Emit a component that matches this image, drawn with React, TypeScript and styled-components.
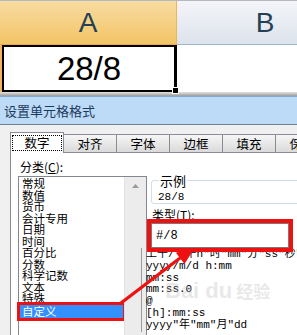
import React from "react";
import styled, { createGlobalStyle } from "styled-components";

const GlobalStyle = createGlobalStyle`
  html, body {
    margin: 0;
    padding: 0;
    background: #f0f0f0;
  }
`;

const Page = styled.div`
  position: relative;
  width: 297px;
  height: 335px;
  overflow: hidden;
  background: #f0f0f0;
  font-family: "Noto Sans CJK SC", sans-serif;
`;

const Sheet = styled.div`
  background: #ffffff;
`;

const HeaderRow = styled.div`
  display: flex;
  height: 45px;
  border-top: 1px solid #b4b9c0;
  box-sizing: border-box;
`;

const ColHeader = styled.div<{ $active?: boolean }>`
  flex: none;
  width: 177px;
  box-sizing: border-box;
  display: flex;
  align-items: center;
  justify-content: center;
  font-family: "Liberation Sans", Arial, sans-serif;
  font-size: 28px;
  color: #253f55;
  background: ${(p) =>
    p.$active
      ? "linear-gradient(#f9dca2, #f2c465)"
      : "linear-gradient(#f3f5f9, #dde3ec)"};
  border-right: 1px solid ${(p) => (p.$active ? "#efb35a" : "#c5cfdb")};
  border-bottom: 1px solid ${(p) => (p.$active ? "#e6a94e" : "#9fb6cf")};
`;

const CellRow = styled.div`
  display: flex;
  height: 47px;
  border-left: 2px solid #f2b45c;
`;

const Cell = styled.div<{ $selected?: boolean }>`
  position: relative;
  flex: none;
  width: ${(p) => (p.$selected ? "175px" : "177px")};
  box-sizing: border-box;
  display: flex;
  align-items: center;
  justify-content: center;
  font-family: "Liberation Sans", Arial, sans-serif;
  font-size: 33px;
  color: #000;
  border: ${(p) => (p.$selected ? "2px solid #000" : "none")};
  border-right: ${(p) => (p.$selected ? "3px solid #000" : "none")};
`;

const FillHandle = styled.div`
  position: absolute;
  right: -5px;
  bottom: -4px;
  width: 5px;
  height: 5px;
  background: #000;
  border: 1px solid #fff;
`;

const Shade = styled.div`
  height: 4px;
  background: linear-gradient(#e4e4e4, #9c9c9c);
`;

const Dialog = styled.div`
  border-top: 1px solid #86a9d1;
`;

const TitleBar = styled.div`
  height: 27px;
  line-height: 27px;
  padding-left: 4px;
  font-size: 13px;
  color: #1c3a5e;
  background: #bddbf7;
  border-bottom: 1px solid #6e7f91;
`;

const Body = styled.div`
  padding: 6px 0 0 10px;
  background: #f0f0f0;
`;

const Tabs = styled.div`
  display: flex;
  align-items: flex-end;
  height: 21px;
`;

const Tab = styled.div<{ $selected?: boolean }>`
  position: relative;
  z-index: ${(p) => (p.$selected ? 2 : 1)};
  flex: none;
  width: 54px;
  height: ${(p) => (p.$selected ? "21px" : "18px")};
  margin-right: -1px;
  margin-bottom: ${(p) => (p.$selected ? "-1px" : "0")};
  box-sizing: border-box;
  display: flex;
  align-items: center;
  justify-content: center;
  font-size: 12.5px;
  color: #000;
  border: 1px solid #898c95;
  border-bottom: none;
  background: ${(p) =>
    p.$selected ? "#ffffff" : "linear-gradient(#f6f6f6, #dadada)"};
`;

const FocusText = styled.span`
  outline: 1px dotted #000;
  padding: 0 11px;
  line-height: 14px;
`;

const Panel = styled.div`
  display: flex;
  gap: 4px;
  height: 200px;
  padding: 7px 0 0 7px;
  background: #ffffff;
  border: 1px solid #898c95;
  border-right: none;
`;

const LeftCol = styled.div`
  flex: none;
  width: 129px;
`;

const Label = styled.div`
  font-size: 12px;
  line-height: 14px;
  height: 15px;
  padding-left: 2px;
  color: #000;
  u {
    text-decoration: underline;
  }
`;

const ListBox = styled.div`
  display: flex;
  height: 170px;
  margin-top: 1px;
  border: 1px solid #828790;
  background: #fff;
`;

const Items = styled.div`
  flex: 1;
  padding: 1px 1px 0 1px;
`;

const Item = styled.div<{ $selected?: boolean }>`
  font-size: 11.5px;
  line-height: ${(p) => (p.$selected ? "13px" : "11.55px")};
  height: ${(p) => (p.$selected ? "13px" : "11.55px")};
  padding-left: 2px;
  white-space: nowrap;
  color: ${(p) => (p.$selected ? "#fff" : "#000")};
  background: ${(p) => (p.$selected ? "#3390ff" : "transparent")};
  outline: ${(p) => (p.$selected ? "3px solid #ee1111" : "none")};
  outline-offset: 0;
`;

const ScrollBar = styled.div`
  flex: none;
  width: 21px;
  background: #ececec;
  border-left: 1px solid #e2e2e2;
`;

const ScrollArrow = styled.div`
  height: 17px;
  display: flex;
  align-items: center;
  justify-content: center;
  svg {
    display: block;
  }
`;

const RightCol = styled.div`
  position: relative;
  flex: none;
  width: 165px;
  padding-top: 14px;
`;

const GroupBox = styled.fieldset`
  margin: 0;
  padding: 0 0 0 6px;
  height: 28px;
  border: 1px solid #d3dde4;
  border-radius: 3px;
  font-family: "Liberation Mono", monospace;
  font-size: 11px;
  line-height: 20px;
  color: #000;
`;

const Legend = styled.legend`
  padding: 0 1px;
  margin-left: 1px;
  font-family: "Noto Sans CJK SC", sans-serif;
  font-size: 13px;
  line-height: 13px;
`;

const TypeLabel = styled(Label)`
  margin-top: 4px;
  padding-left: 1px;
`;

const TypeInput = styled.div`
  position: relative;
  z-index: 1;
  width: 138px;
  height: 25px;
  box-sizing: border-box;
  display: flex;
  align-items: center;
  padding-left: 4px;
  font-family: "Liberation Mono", monospace;
  font-size: 12px;
  border: 1px solid #7a7a7a;
  background: #fff;
  outline: 4px solid #ee1111;
`;

const TypeList = styled.div`
  margin-left: -10px;
  padding: 1px 0 0 4px;
  border-left: 1px solid #9a9a9a;
  font-family: "Liberation Mono", "Noto Sans CJK SC", monospace;
  font-size: 11px;
`;

const TypeRow = styled.div`
  line-height: 11.8px;
  height: 11.8px;
  white-space: nowrap;
  color: #000;
`;

const Watermark = styled.div`
  position: absolute;
  left: 14px;
  top: 118px;
  display: flex;
  align-items: baseline;
  gap: 4px;
  font-family: "Liberation Sans", "Noto Sans CJK SC", sans-serif;
  font-size: 22px;
  font-weight: bold;
  color: rgba(190, 190, 190, 0.35);
  pointer-events: none;
`;

const WatermarkCjk = styled.span`
  font-size: 17px;
`;

const Arrow = styled.svg`
  position: absolute;
  left: 0;
  top: 0;
  pointer-events: none;
`;

const categories = [
  "常规",
  "数值",
  "货币",
  "会计专用",
  "日期",
  "时间",
  "百分比",
  "分数",
  "科学记数",
  "文本",
  "特殊",
  "自定义",
];

const formats = [
  '上午/下午h"时"mm"分"ss"秒"',
  "yyyy/m/d h:mm",
  "mm:ss",
  "mm:ss.0",
  "@",
  "[h]:mm:ss",
  'yyyy"年"mm"月"dd',
];

const tabs = ["数字", "对齐", "字体", "边框", "填充", "保护"];

const App: React.FC = () => {
  return (
    <>
      <GlobalStyle />
      <Page>
        <Sheet>
          <HeaderRow>
            <ColHeader $active>A</ColHeader>
            <ColHeader>B</ColHeader>
          </HeaderRow>
          <CellRow>
            <Cell $selected>
              28/8
              <FillHandle />
            </Cell>
            <Cell />
          </CellRow>
          <Shade />
        </Sheet>
        <Dialog>
          <TitleBar>设置单元格格式</TitleBar>
          <Body>
            <Tabs>
              {tabs.map((t, i) => (
                <Tab key={t} $selected={i === 0}>
                  {i === 0 ? <FocusText>{t}</FocusText> : t}
                </Tab>
              ))}
            </Tabs>
            <Panel>
              <LeftCol>
                <Label>
                  分类(<u>C</u>):
                </Label>
                <ListBox>
                  <Items>
                    {categories.map((c, i) => (
                      <Item key={c} $selected={i === categories.length - 1}>
                        {c}
                      </Item>
                    ))}
                  </Items>
                  <ScrollBar>
                    <ScrollArrow>
                      <svg width="7" height="4" viewBox="0 0 7 4">
                        <path d="M0 4 L3.5 0 L7 4 Z" fill="#9a9a9a" />
                      </svg>
                    </ScrollArrow>
                  </ScrollBar>
                </ListBox>
              </LeftCol>
              <RightCol>
                <GroupBox>
                  <Legend>示例</Legend>
                  28/8
                </GroupBox>
                <TypeLabel>
                  类型(<u>T</u>):
                </TypeLabel>
                <TypeInput>#/8</TypeInput>
                <TypeList>
                  {formats.map((f) => (
                    <TypeRow key={f}>{f}</TypeRow>
                  ))}
                </TypeList>
                <Watermark>
                  Bai du <WatermarkCjk>经验</WatermarkCjk>
                </Watermark>
              </RightCol>
            </Panel>
          </Body>
        </Dialog>
        <Arrow width="297" height="335" viewBox="0 0 297 335">
          <line x1="121" y1="303" x2="184" y2="255" stroke="#ee1111" strokeWidth="3.2" />
          <polygon points="196,246 184.5,264 175.9,252.8" fill="#ee1111" />
        </Arrow>
      </Page>
    </>
  );
};

export default App;
